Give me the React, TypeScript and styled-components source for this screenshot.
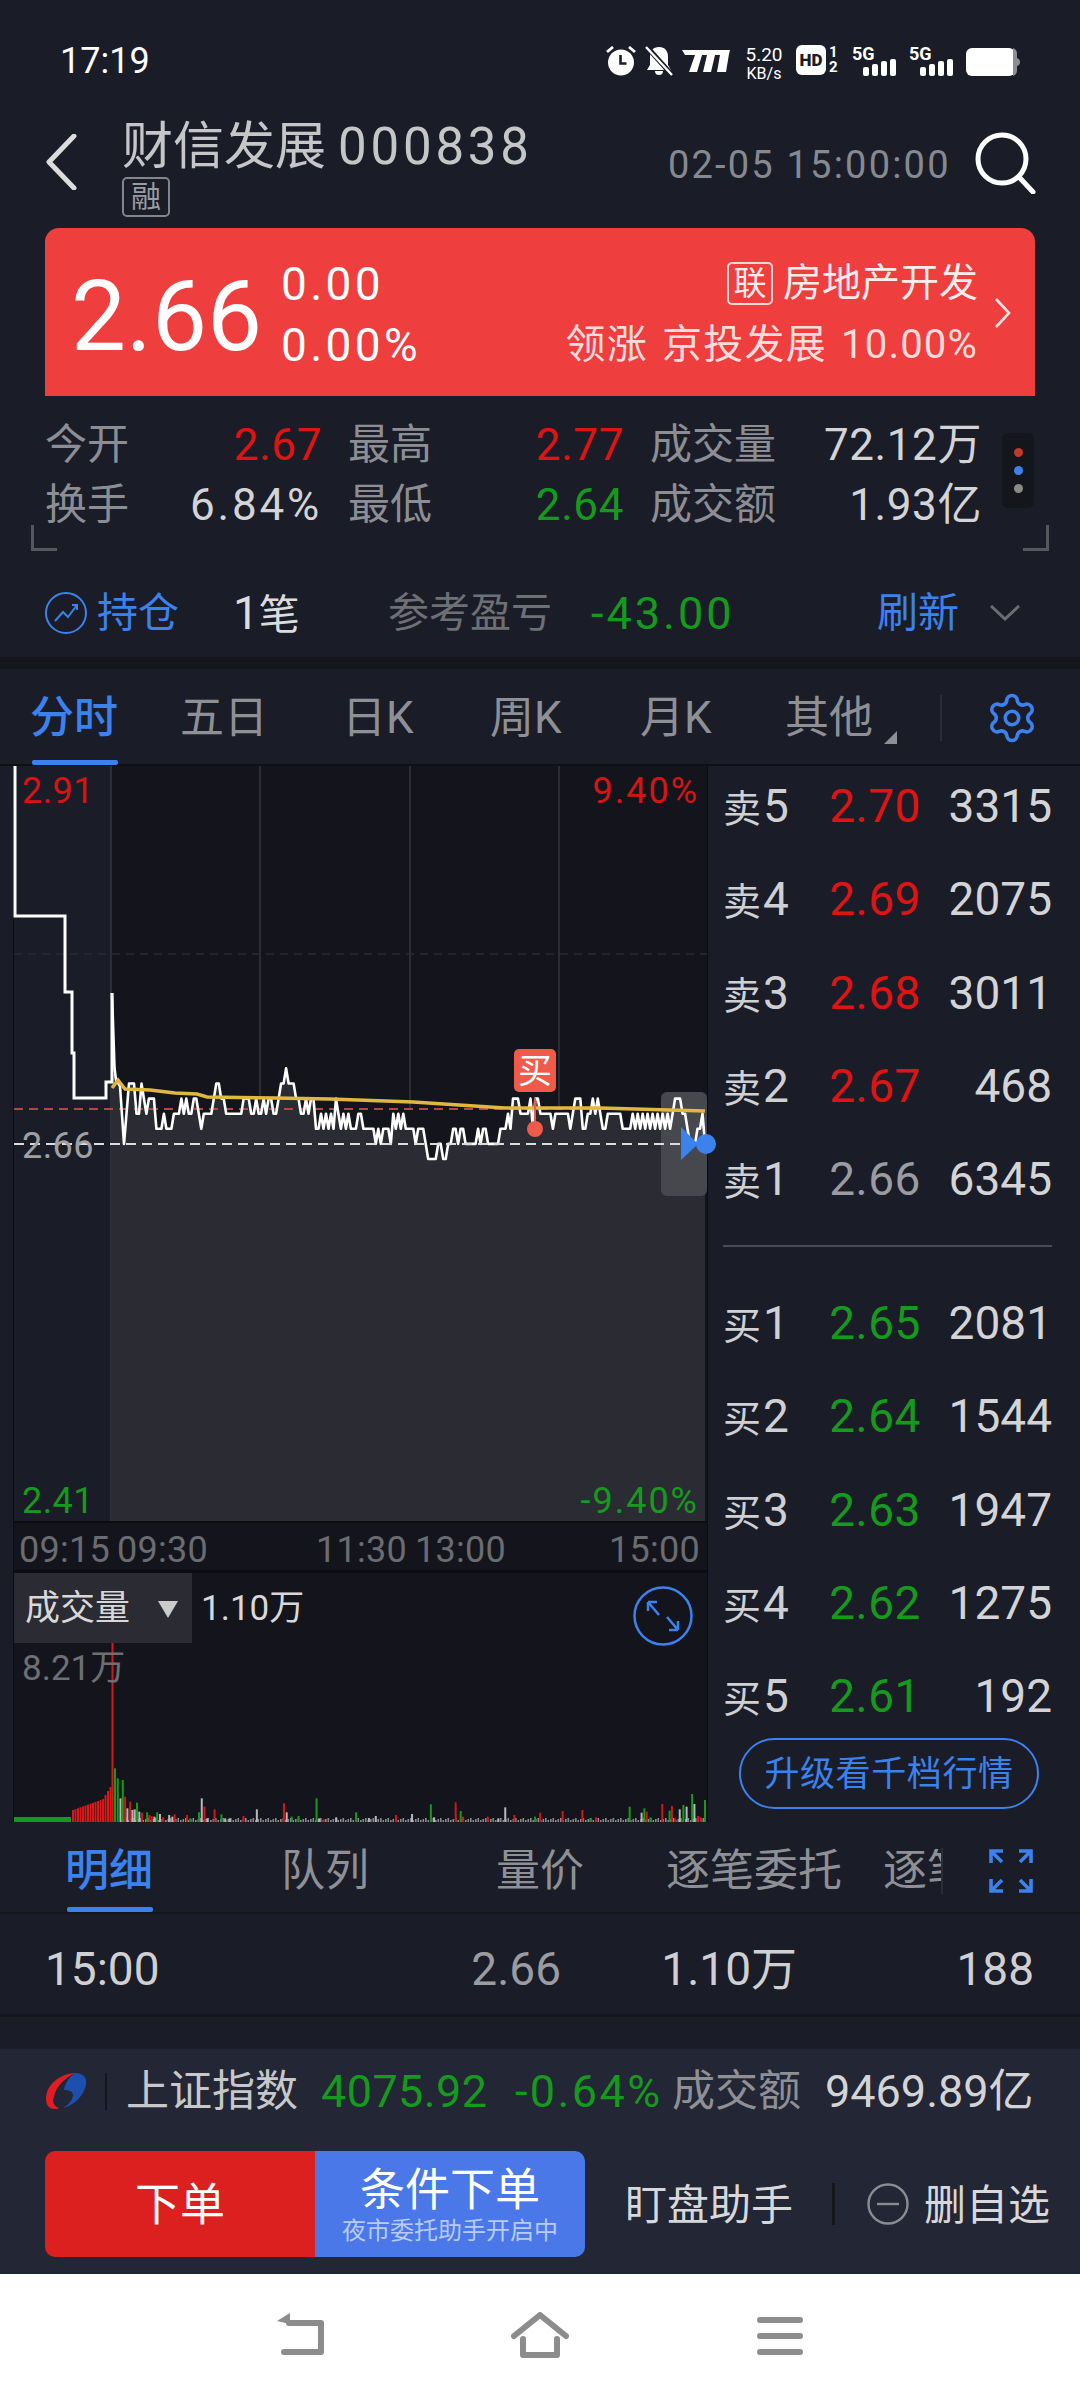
import React from "react";
import styled, { createGlobalStyle } from "styled-components";
import { Settings } from "lucide-react";

const RED = "#e01313";
const GREEN = "#149a1d";
const BLUE = "#3b82ee";

const GlobalStyle = createGlobalStyle`
  html, body {
    margin: 0;
    padding: 0;
    background: #1a1d28;
  }
  * {
    box-sizing: border-box;
  }
  body {
    font-family: Roboto, "Noto Sans CJK SC", sans-serif;
  }
`;

const Page = styled.div`
  width: 1080px;
  height: 2400px;
  overflow: hidden;
  background: #1a1d28;
  color: #c8c8c8;
  display: flex;
  flex-direction: column;
  line-height: 1;
  white-space: nowrap;
`;

/* status bar */
const StatusBar = styled.div`
  height: 110px;
  padding: 45px 60px 0 60px;
  display: flex;
  align-items: flex-start;
  justify-content: space-between;
`;

const Clock = styled.span`
  font-size: 36px;
  line-height: 32px;
  color: #fff;
`;

const StatusIcons = styled.div`
  display: flex;
  align-items: flex-start;
  height: 32px;
  color: #fff;
`;

const NetSpeed = styled.div`
  width: 38px;
  margin: 0 13px 0 15px;
  display: flex;
  flex-direction: column;
  align-items: center;
  font-size: 19px;
  gap: 2px;
  span + span {
    font-size: 16px;
  }
`;

const HdBadge = styled.span`
  width: 30px;
  height: 30px;
  border-radius: 6px;
  background: #fff;
  color: #1a1d28;
  font-size: 17px;
  font-weight: 900;
  display: flex;
  align-items: center;
  justify-content: center;
`;

const SimDigits = styled.div`
  width: 12px;
  margin-left: 3px;
  margin-right: 11px;
  display: flex;
  flex-direction: column;
  justify-content: space-between;
  height: 30px;
  font-size: 15px;
  font-weight: 700;
`;

const Signal = styled.div`
  width: 44px;
  height: 31px;
  position: relative;
  margin-right: 13px;
  font-size: 18px;
  font-weight: 700;
`;

const SignalBars = styled.div`
  position: absolute;
  right: 0;
  bottom: 0;
  display: flex;
  align-items: flex-end;
  gap: 3px;
`;

const SignalBar = styled.i<{ $h: number }>`
  display: block;
  width: 6px;
  height: ${(p) => p.$h}px;
  border-radius: 2px;
  background: #fff;
`;

/* header */
const Header = styled.div`
  height: 118px;
  position: relative;
  display: flex;
  padding-left: 45px;
`;

const TitleBlock = styled.div`
  margin-left: 45px;
  padding-top: 9px;
  display: flex;
  flex-direction: column;
  align-items: flex-start;
`;

const Title = styled.div`
  font-size: 51px;
  line-height: 56px;
  color: #c6c6c8;
  span {
    letter-spacing: 3.8px;
    margin-left: 12px;
  }
`;

const MarginBadge = styled.span`
  width: 48px;
  height: 40px;
  margin-top: 2px;
  border: 2px solid #83858c;
  border-radius: 5px;
  color: #9a9ca2;
  font-size: 30px;
  display: flex;
  align-items: center;
  justify-content: center;
`;

const QuoteTime = styled.span`
  position: absolute;
  left: 668px;
  top: 36px;
  font-size: 38px;
  letter-spacing: 2.2px;
  color: #868a90;
`;

const SearchSlot = styled.div`
  position: absolute;
  left: 975px;
  top: 22px;
`;

const BackSlot = styled.div`
  padding-top: 24px;
`;

/* quote card */
const QuoteCard = styled.div`
  height: 168px;
  margin: 0 45px;
  border-radius: 14px 14px 0 0;
  background: #ef3e3e;
  color: #fff;
  display: flex;
  align-items: center;
  padding-left: 26px;
  position: relative;
`;

const LastPrice = styled.span`
  font-size: 98px;
  width: 210px;
  margin-top: 10px;
`;

const ChangeStack = styled.div`
  display: flex;
  flex-direction: column;
  gap: 15px;
  margin-top: 5px;
  font-size: 46px;
  letter-spacing: 3.3px;
`;

const SectorStack = styled.div`
  margin-left: auto;
  margin-right: 57px;
  margin-top: 3px;
  display: flex;
  flex-direction: column;
  align-items: flex-end;
  gap: 20px;
`;

const SectorLine = styled.div<{ $soft?: boolean }>`
  display: flex;
  align-items: center;
  font-size: ${(p) => (p.$soft ? 40 : 39)}px;
  letter-spacing: ${(p) => (p.$soft ? 1.2 : 0)}px;
  word-spacing: ${(p) => (p.$soft ? 3 : 0)}px;
  color: ${(p) => (p.$soft ? "#ffdcdc" : "#ffecec")};
`;

const LinkBadge = styled.span`
  width: 46px;
  height: 43px;
  margin-right: 10px;
  border: 2px solid #ffd9d9;
  border-radius: 5px;
  font-size: 33px;
  display: flex;
  align-items: center;
  justify-content: center;
`;

const CardChevron = styled.div`
  position: absolute;
  left: 949px;
  top: 70px;
`;

/* stats */
const Stats = styled.div`
  height: 164px;
  position: relative;
  padding: 19px 0 0 45px;
  display: flex;
  align-items: flex-start;
  gap: 20px;
`;

const StatsGrid = styled.div`
  width: 937px;
  display: grid;
  grid-template-columns: 91px 186px 116px 186px 156px 202px;
  grid-auto-rows: 60px;
  align-items: center;
  & > *:nth-child(6n + 3),
  & > *:nth-child(6n + 5) {
    margin-left: 26px;
  }
`;

const StatLabel = styled.span`
  font-size: 42px;
  color: #8c8e94;
`;

const StatValue = styled.span<{ $color?: string; $track?: number }>`
  font-size: 44px;
  letter-spacing: ${(p) => p.$track || 0.6}px;
  text-align: right;
  color: ${(p) => p.$color || "#d4d4d6"};
`;

const DotsPanel = styled.div`
  width: 32px;
  height: 75px;
  margin-top: 18px;
  border-radius: 6px;
  background: #15161b;
  display: flex;
  flex-direction: column;
  align-items: center;
  justify-content: center;
  gap: 9px;
`;

const Dot = styled.i<{ $color: string }>`
  display: block;
  width: 9px;
  height: 9px;
  border-radius: 50%;
  background: ${(p) => p.$color};
`;

const Corner = styled.i<{ $right?: boolean }>`
  position: absolute;
  top: 129px;
  ${(p) => (p.$right ? "left: 1023px;" : "left: 31px;")}
  width: 26px;
  height: 26px;
  border-bottom: 3px solid #55575e;
  ${(p) =>
    p.$right ? "border-right: 3px solid #55575e;" : "border-left: 3px solid #55575e;"}
`;

/* holdings */
const Holdings = styled.div`
  height: 97px;
  padding: 9px 0 0 45px;
  display: grid;
  grid-template-columns: 52px 136px 155px 203px 286px 113px 1fr;
  align-items: center;
`;

const HoldingText = styled.span<{ $color: string; $big?: boolean }>`
  font-size: ${(p) => (p.$big ? 45 : 41)}px;
  letter-spacing: ${(p) => (p.$big ? 3 : 0)}px;
  color: ${(p) => p.$color};
  b {
    font-weight: 400;
    font-size: 46px;
  }
`;

const Band = styled.div`
  height: 12px;
  flex: none;
  background: #14161c;
`;

/* period tabs */
const PeriodTabs = styled.div`
  height: 97px;
  flex: none;
  padding: 2px 0 0 30px;
  display: grid;
  grid-template-columns: 150px 162px 148px 150px 145px 155px 45px 1fr;
  align-items: center;
  border-bottom: 2px solid #0f1015;
`;

const Tab = styled.span<{ $active?: boolean; $under?: number }>`
  position: relative;
  justify-self: start;
  font-size: 44px;
  color: ${(p) => (p.$active ? BLUE : "#8e9096")};
  font-weight: ${(p) => (p.$active ? 500 : 400)};
  height: 44px;
  line-height: 44px;
  ${(p) =>
    p.$active &&
    `&::after {
      content: "";
      position: absolute;
      left: 2px;
      right: 0;
      bottom: ${p.$under}px;
      height: 5px;
      border-radius: 2px;
      background: ${BLUE};
    }`}
`;

const OtherMark = styled.i`
  position: absolute;
  right: -24px;
  bottom: -4px;
  width: 0;
  height: 0;
  border-left: 13px solid transparent;
  border-bottom: 13px solid #8e9096;
`;

const TabSep = styled.i`
  display: block;
  width: 2px;
  height: 46px;
  background: #2a2d38;
`;

/* main chart area */
const Market = styled.div`
  height: 1056px;
  flex: none;
  display: flex;
`;

const ChartColumn = styled.div`
  width: 695px;
  margin-left: 13px;
  padding: 0 1px;
  background: #0c0d11;
  display: flex;
  flex-direction: column;
`;

const PricePane = styled.div`
  height: 755px;
  flex: none;
  position: relative;
  svg {
    display: block;
    overflow: visible;
  }
`;

const ChartLabel = styled.span<{ $color: string; $top: number; $right?: boolean }>`
  position: absolute;
  top: ${(p) => p.$top}px;
  ${(p) => (p.$right ? "right: 8px;" : "left: 8px;")}
  font-size: 36px;
  letter-spacing: ${(p) => (p.$right ? 2 : 0.4)}px;
  color: ${(p) => p.$color};
`;

const BuyTag = styled.span`
  position: absolute;
  left: 500px;
  top: 283px;
  width: 42px;
  height: 43px;
  border-radius: 5px;
  background: #ef5b4b;
  color: #fff;
  font-size: 34px;
  display: flex;
  align-items: center;
  justify-content: center;
`;

const TimeAxis = styled.div`
  height: 47px;
  flex: none;
  margin-top: 2px;
  background: #14151c;
  position: relative;
`;

const TimeTick = styled.span<{ $x: number }>`
  position: absolute;
  top: 9px;
  left: ${(p) => p.$x}px;
  font-size: 36px;
  letter-spacing: 0.3px;
  color: #6a6c72;
`;

const VolumePane = styled.div`
  flex: 1;
  margin-top: 3px;
  background: #14151c;
  position: relative;
  display: flex;
  flex-direction: column;
  svg {
    display: block;
  }
`;

const VolumeHead = styled.div`
  height: 70px;
  flex: none;
  display: flex;
  align-items: center;
  font-size: 35px;
  color: #d8d8da;
`;

const VolumeSelect = styled.div`
  width: 178px;
  height: 70px;
  margin-right: 9px;
  padding-left: 11px;
  background: #2b2c33;
  display: flex;
  align-items: center;
  gap: 28px;
  i {
    width: 0;
    height: 0;
    margin-top: 2px;
    border-left: 10px solid transparent;
    border-right: 10px solid transparent;
    border-top: 17px solid #ccc;
  }
`;

const MaxVolume = styled.span`
  position: absolute;
  left: 8px;
  top: 78px;
  font-size: 35px;
  color: #6e6f74;
`;

const ExpandSlot = styled.div`
  position: absolute;
  left: 619px;
  top: 13px;
`;

/* order book */
const OrderBook = styled.div`
  flex: 1;
  padding: 10px 28px 0 15px;
  display: flex;
  flex-direction: column;
`;

const OrderRows = styled.div`
  display: flex;
  flex-direction: column;
  gap: 33.25px;
`;

const OrderRow = styled.div`
  height: 60px;
  display: grid;
  grid-template-columns: 96px 112px 1fr;
  align-items: center;
`;

const OrderLabel = styled.span`
  font-size: 38px;
  color: #d0d0d2;
  b {
    font-weight: 400;
    font-size: 46px;
    margin-left: 2px;
  }
`;

const OrderPrice = styled.span<{ $color: string }>`
  font-size: 46px;
  letter-spacing: 0.4px;
  text-align: center;
  color: ${(p) => p.$color};
`;

const OrderQty = styled.span`
  font-size: 46px;
  text-align: right;
  color: #d4d4d6;
`;

const BookDivider = styled.div`
  height: 2px;
  margin: 36px 0 46px;
  background: #4a4c55;
`;

const UpgradeButton = styled.div`
  width: 300px;
  height: 71px;
  margin: 12px 0 0 16px;
  padding-top: 2px;
  border: 2px solid ${BLUE};
  border-radius: 36px;
  color: ${BLUE};
  font-size: 35px;
  letter-spacing: 0.6px;
  display: flex;
  align-items: center;
  justify-content: center;
`;

/* detail tabs */
const DetailTabs = styled.div`
  height: 92px;
  flex: none;
  padding: 8px 0 0 65px;
  display: grid;
  grid-template-columns: 216px 215px 170px 217px 58px 48px 1fr;
  align-items: center;
  border-bottom: 2px solid #14161c;
`;

const ClippedTab = styled.div`
  overflow: hidden;
  font-size: 44px;
  color: #8e9096;
`;

const DetailRow = styled.div`
  height: 103px;
  flex: none;
  padding: 9px 46px 0 45px;
  display: grid;
  grid-template-columns: 200px 316px 236px 1fr;
  align-items: center;
  border-bottom: 3px solid #14161c;
  font-size: 46px;
  color: #d0d0d2;
`;

const DetailCell = styled.span<{ $right?: boolean; $dim?: boolean }>`
  ${(p) => p.$right && "text-align: right;"}
  ${(p) => p.$dim && "color: #9a9ca0;"}
`;

const Spacer = styled.div`
  height: 32px;
  flex: none;
`;

/* footer */
const Footer = styled.div`
  height: 225px;
  flex: none;
  background: #232634;
`;

const IndexRow = styled.div`
  height: 84px;
  padding-left: 45px;
  display: grid;
  grid-template-columns: 60px 21px 195px 194px 157px 153px 1fr;
  align-items: center;
`;

const IndexSep = styled.i`
  display: block;
  width: 2px;
  height: 37px;
  background: #14161c;
`;

const IndexText = styled.span<{ $color: string; $cjk?: boolean; $track?: number }>`
  color: ${(p) => p.$color};
  font-size: ${(p) => (p.$cjk ? 43 : 45)}px;
  letter-spacing: ${(p) => p.$track || 0}px;
`;

const ActionRow = styled.div`
  margin-top: 18px;
  padding-left: 45px;
  display: flex;
  align-items: center;
`;

const OrderButtons = styled.div`
  width: 540px;
  height: 106px;
  border-radius: 10px;
  overflow: hidden;
  display: flex;
`;

const OrderButton = styled.div<{ $bg: string }>`
  width: 270px;
  padding-top: 3px;
  background: ${(p) => p.$bg};
  color: #fff;
  font-size: 45px;
  display: flex;
  flex-direction: column;
  align-items: center;
  justify-content: center;
  small {
    font-size: 24px;
    margin-top: 6px;
    color: #b8cbf8;
  }
`;

const ActionText = styled.span<{ $lead?: number }>`
  margin-left: ${(p) => p.$lead || 0}px;
  padding-top: 3px;
  font-size: 42px;
  color: #d8d8da;
`;

const ActionSep = styled.i`
  display: block;
  width: 3px;
  height: 42px;
  margin: 0 32px 0 39px;
  background: #14161c;
`;

const WatchIcon = styled.div`
  margin-right: 15px;
  display: flex;
`;

/* nav */
const NavBar = styled.div`
  height: 126px;
  flex: none;
  background: #fff;
  display: grid;
  grid-template-columns: 236px 246px 1fr;
  padding-left: 275px;
  padding-top: 38px;
  align-items: start;
`;

const PRE_LEVELS = `1 3 5 5 5 3 3 5 4 3 4 4 4 2 2 2 3 2 2 2 3 3 3 4 3 4 3 3 4 4 3 2 3 3 3 3 4 5 5 4 4 3 3 3 3 3 3 3
4 4 4 3 3 4 3 3 4 3 4 4 3 3 4 5 5 6 5 5 5 4 4 3 3 4 3 4 4 2 2 3 2 3 2 3 2 4 3 2 3 2 3 2 2 2 3 3 2 2 2 2 2 1 2 1 2 2 2 1
3 2 3 2 3 2 2 2 2 1 2 2 2 1 0 0 0 0 1 1 0 0 1 1 2 2 1 2 2 1 1 1 1 1 2 1 2 2 1 1 1 1 1 2 2 2 3 2 4 4 4 3 3 3 3 4 2 4 4 3
3 3 3 3 2 3 3 3 3 3 3 2 3 4 4 4 2 2 3 3 4 3 4 3 2 2 3 3 3 3 3 3 2 2 2 2 3 2 3 2 3 2 3 2 3 2 3 2 3 2 3 2 3 4 4 4 3 3 2 1
1 1 2 2 3 1`
  .trim()
  .split(/\s+/)
  .map(Number);

const levelY = (l: number) => 1159 - l * 15.1;

// points are in page coordinates, the svg viewBox is set to the same space
function priceLine() {
  const start = 124;
  const end = 705;
  const step = (end - start) / (PRE_LEVELS.length - 1);
  const tail = PRE_LEVELS.map(
    (l, i) => `L${(start + i * step).toFixed(1)} ${levelY(l).toFixed(1)}`
  ).join(" ");
  return `M112 993 L114.5 1068 L116 1080 L120 1086 ${tail}`;
}

const openPart = "M15 766 L15 916 L65 916 L65 992 L72 992 L72 1053 L74 1053 L74 1098 L106 1098 L106 1082 L112 1082 L112 993";

type VolBar = [number, number, "g" | "r" | "w"];

const VOL_COLORS = { g: "#149a1d", r: "#d01818", w: "#b8b8ba" };

const VOL_BARS: VolBar[] = [
  [250, 865, "g"], [256, 895, "g"], [262, 955, "w"], [267, 900, "g"], [272, 950, "r"], [277, 985, "w"],
  [283, 965, "r"], [288, 990, "w"], [293, 988, "w"], [298, 968, "g"], [303, 995, "w"], [309, 998, "r"],
  [320, 997, "g"], [325, 1005, "r"], [330, 1008, "r"], [336, 1010, "w"], [342, 997, "g"], [348, 1002, "w"],
  [355, 1012, "r"], [368, 1005, "w"], [375, 1010, "w"], [380, 1003, "r"], [407, 1005, "r"], [414, 1015, "g"],
  [433, 997, "g"], [439, 955, "w"], [445, 980, "r"], [451, 1015, "w"], [467, 988, "r"], [482, 1003, "g"],
  [490, 1015, "w"], [500, 1015, "w"], [530, 1008, "r"], [559, 988, "w"], [618, 970, "r"], [624, 997, "w"],
  [635, 1010, "g"], [650, 1008, "g"], [689, 955, "g"], [695, 1015, "w"], [705, 1018, "r"], [732, 1012, "w"],
  [775, 997, "g"], [803, 1014, "w"], [818, 1008, "w"], [862, 1005, "r"], [897, 1002, "w"], [938, 973, "g"],
  [945, 1012, "w"], [992, 967, "r"], [1003, 993, "g"], [1008, 1010, "r"], [1062, 1010, "r"], [1085, 1015, "w"],
  [1100, 982, "w"], [1120, 1005, "r"], [1165, 1010, "g"], [1176, 998, "r"], [1225, 993, "r"], [1268, 990, "r"],
  [1285, 1015, "g"], [1298, 1012, "r"], [1371, 980, "g"], [1397, 998, "w"], [1403, 985, "g"], [1408, 995, "r"],
  [1416, 1012, "g"], [1442, 972, "r"], [1458, 992, "g"], [1463, 978, "r"], [1470, 1015, "r"], [1480, 988, "w"],
  [1488, 975, "g"], [1495, 980, "w"], [1507, 942, "g"], [1512, 972, "w"], [1520, 1008, "r"], [1526, 1012, "r"],
  [1535, 960, "g"],
];

const SELLS = [
  ["5", "2.70", RED, "3315"],
  ["4", "2.69", RED, "2075"],
  ["3", "2.68", RED, "3011"],
  ["2", "2.67", RED, "468"],
  ["1", "2.66", "#9a9ca0", "6345"],
];

const BUYS = [
  ["1", "2.65", GREEN, "2081"],
  ["2", "2.64", GREEN, "1544"],
  ["3", "2.63", GREEN, "1947"],
  ["4", "2.62", GREEN, "1275"],
  ["5", "2.61", GREEN, "192"],
];

function PriceChart() {
  const line = priceLine();
  return (
    <svg width="693" height="755" viewBox="14 766 693 755">
      <rect x="14" y="766" width="97" height="755" fill="#1a1d28" />
      <rect x="111" y="766" width="596" height="755" fill="#14151c" />
      <path d={`${line} L705 1521 L112 1521 Z`} fill="#2b2c33" />
      {[111, 260, 410, 559].map((x) => (
        <line key={x} x1={x} x2={x} y1="766" y2={x === 111 ? 1521 : 1110} stroke="#33353f" strokeWidth="1.5" />
      ))}
      <line x1="14" x2="707" y1="954" y2="954" stroke="#2a2b31" strokeWidth="1.5" strokeDasharray="8 6" />
      <line x1="14" x2="707" y1="1109" y2="1109" stroke="#b5483e" strokeWidth="2" strokeDasharray="9 6" />
      <rect x="661" y="1092" width="46" height="104" rx="6" fill="#47484e" />
      <path d={openPart} fill="none" stroke="#fff" strokeWidth="3" />
      <path d={line} fill="none" stroke="#fff" strokeWidth="2.6" strokeLinejoin="round" />
      <line x1="14" x2="685" y1="1144" y2="1144" stroke="#dcdcdc" strokeWidth="2" strokeDasharray="10 6" />
      <path
        d="M112 1088 L118 1080 L125 1089 L150 1090 L175 1093 L197 1094 L207 1097 L275 1098 L330 1099 L413 1102 L459 1105 L505 1108 L600 1108 L705 1111"
        fill="none"
        stroke="#e0b840"
        strokeWidth="3.4"
      />
      <circle cx="535" cy="1129" r="8" fill="#ef5b4b" />
      <line x1="535" x2="535" y1="1098" y2="1124" stroke="#ef5b4b" strokeWidth="2" />
      <path d="M681 1127 L698 1144 L681 1160 Z" fill={BLUE} />
      <circle cx="706" cy="1144" r="10" fill={BLUE} />
    </svg>
  );
}

function VolumeChart() {
  const ramp = Array.from({ length: 16 }, (_, i) => i);
  const tiny = Array.from({ length: 234 }, (_, i) => i);
  return (
    <svg width="693" height="179" viewBox="14 1643 693 179">
      <line x1="112.5" x2="112.5" y1="1643" y2="1822" stroke="#d81818" strokeWidth="2" />
      <rect x="14" y="1817" width="57" height="5" fill={GREEN} />
      {ramp.map((i) => {
        const h = i < 12 ? 12 + i * 0.9 : 23 + (i - 12) * 4;
        return <rect key={i} x={72 + i * 2.5} y={1822 - h} width="2" height={h} fill="#d81818" />;
      })}
      {tiny.map((i) => (
        <rect key={i} x={120 + i * 2.5} y={1820 - (i * 7) % 3} width="1.6" height={2 + (i * 7) % 3} fill="#8a8a8c" />
      ))}
      {VOL_BARS.map(([zx, zy, c]) => (
        <rect
          key={zx}
          x={zx / 2.178 - 0.8}
          y={1480 + zy / 3}
          width="2"
          height={1822 - (1480 + zy / 3)}
          fill={VOL_COLORS[c]}
        />
      ))}
    </svg>
  );
}

function AlarmIcon() {
  return (
    <svg width="30" height="30" viewBox="0 0 30 30" style={{ marginTop: 1 }}>
      <circle cx="15" cy="16.5" r="13" fill="#fff" />
      <path d="M14.5 9v8.5h6" fill="none" stroke="#1a1d28" strokeWidth="2.6" />
      <path d="M1 6l6-5M29 6l-6-5" stroke="#fff" strokeWidth="2.8" />
    </svg>
  );
}

function MutedBell() {
  return (
    <svg width="28" height="30" viewBox="0 0 28 30" style={{ marginLeft: 9, marginTop: 1 }}>
      <path d="M14 1c6 0 9 4 9 10v8l3 5H2l3-5v-8c0-6 3-10 9-10z" fill="#fff" />
      <path d="M10 25h8a4 4 0 0 1-8 0z" fill="#fff" />
      <path d="M2 1l25 28" stroke="#1a1d28" strokeWidth="5" />
      <path d="M1 1l26 28" stroke="#fff" strokeWidth="2.4" />
    </svg>
  );
}

function CarrierLogo() {
  return (
    <svg width="48" height="24" viewBox="0 0 48 24" style={{ marginLeft: 9, marginTop: 4 }}>
      <path d="M0 1h48l-1 4-3 18h-9l3-17h-5l-4 17h-8l4-17h-5l-5 17H7l6-17H3z" fill="#fff" />
    </svg>
  );
}

function BatteryIcon() {
  return (
    <svg width="54" height="28" viewBox="0 0 54 28" style={{ marginTop: 3 }}>
      <rect x="0" y="0" width="49" height="28" rx="6" fill="#fff" />
      <path d="M47 0a6 6 0 0 1 4 6v16a6 6 0 0 1-4 6z" fill="#8d8f95" />
      <path d="M51 10q3 1 3 4t-3 4z" fill="#8d8f95" />
    </svg>
  );
}

function BackArrow() {
  return (
    <svg width="32" height="56" viewBox="0 0 32 56">
      <path d="M29 2L4 28l25 26" fill="none" stroke="#dcdcdc" strokeWidth="5" strokeLinecap="round" strokeLinejoin="round" />
    </svg>
  );
}

function SearchIcon() {
  return (
    <svg width="62" height="62" viewBox="0 0 62 62">
      <circle cx="27" cy="27" r="24" fill="none" stroke="#fff" strokeWidth="5" />
      <path d="M44 45l14 15" stroke="#fff" strokeWidth="5" strokeLinecap="round" />
    </svg>
  );
}

function TrendCircle() {
  return (
    <svg width="42" height="42" viewBox="0 0 42 42">
      <circle cx="21" cy="21" r="20" fill="none" stroke={BLUE} strokeWidth="2" />
      <path d="M10 29l8-9 5 5 9-12M27 13h5v5" fill="none" stroke={BLUE} strokeWidth="2" />
    </svg>
  );
}

function ExpandCircle() {
  return (
    <svg width="60" height="60" viewBox="0 0 60 60">
      <circle cx="30" cy="30" r="28.5" fill="none" stroke={BLUE} strokeWidth="2.5" />
      <path d="M15 16l11 13M15 16v9M15 16h9M45 44L34 31M45 44v-9M45 44h-9" fill="none" stroke={BLUE} strokeWidth="2.5" />
    </svg>
  );
}

function CornersIcon() {
  return (
    <svg width="44" height="44" viewBox="0 0 44 44">
      <path
        d="M2 14V2h12M2 2l11 11M42 14V2H30M42 2L31 13M2 30v12h12M2 42l11-11M42 30v12H30M42 42L31 31"
        fill="none"
        stroke={BLUE}
        strokeWidth="3.6"
      />
    </svg>
  );
}

function IndexLogo() {
  return (
    <svg width="42" height="38" viewBox="0 0 42 38">
      <path d="M30 1C14 2 1 13 1 27c0 7 4 10 9 10 1 0 3 0 4-1-5-2-7-6-5-11C11 14 20 6 30 1z" fill="#e01d25" />
      <path d="M30 1c8 0 12 4 11 11-1 10-12 22-23 24 5-3 10-8 10-13 0-4-5-5-9-5 1-7 6-14 11-17z" fill="#1c4fae" />
    </svg>
  );
}

export default function App() {
  return (
    <Page>
      <GlobalStyle />
      <StatusBar>
        <Clock>17:19</Clock>
        <StatusIcons>
          <AlarmIcon />
          <MutedBell />
          <CarrierLogo />
          <NetSpeed>
            <span>5.20</span>
            <span>KB/s</span>
          </NetSpeed>
          <HdBadge>HD</HdBadge>
          <SimDigits>
            <span>1</span>
            <span>2</span>
          </SimDigits>
          <Signal>
            5G
            <SignalBars>
              {[9, 12, 15, 17].map((h) => (
                <SignalBar key={h} $h={h} />
              ))}
            </SignalBars>
          </Signal>
          <Signal>
            5G
            <SignalBars>
              {[9, 12, 15, 17].map((h) => (
                <SignalBar key={h} $h={h} />
              ))}
            </SignalBars>
          </Signal>
          <BatteryIcon />
        </StatusIcons>
      </StatusBar>

      <Header>
        <BackSlot>
          <BackArrow />
        </BackSlot>
        <TitleBlock>
          <Title>
            财信发展<span>000838</span>
          </Title>
          <MarginBadge>融</MarginBadge>
        </TitleBlock>
        <QuoteTime>02-05 15:00:00</QuoteTime>
        <SearchSlot>
          <SearchIcon />
        </SearchSlot>
      </Header>

      <QuoteCard>
        <LastPrice>2.66</LastPrice>
        <ChangeStack>
          <span>0.00</span>
          <span>0.00%</span>
        </ChangeStack>
        <SectorStack>
          <SectorLine>
            <LinkBadge>联</LinkBadge>房地产开发
          </SectorLine>
          <SectorLine $soft>领涨 京投发展 10.00%</SectorLine>
        </SectorStack>
        <CardChevron>
          <svg width="18" height="30" viewBox="0 0 18 30">
            <path d="M2 1l13 14L2 29" fill="none" stroke="#ffe4e4" strokeWidth="2.6" />
          </svg>
        </CardChevron>
      </QuoteCard>

      <Stats>
        <StatsGrid>
          <StatLabel>今开</StatLabel>
          <StatValue $color={RED}>2.67</StatValue>
          <StatLabel>最高</StatLabel>
          <StatValue $color={RED}>2.77</StatValue>
          <StatLabel>成交量</StatLabel>
          <StatValue>72.12万</StatValue>
          <StatLabel>换手</StatLabel>
          <StatValue $track={2.8}>6.84%</StatValue>
          <StatLabel>最低</StatLabel>
          <StatValue $color={GREEN}>2.64</StatValue>
          <StatLabel>成交额</StatLabel>
          <StatValue>1.93亿</StatValue>
        </StatsGrid>
        <DotsPanel>
          <Dot $color="#c0392b" />
          <Dot $color={BLUE} />
          <Dot $color="#8a8a8a" />
        </DotsPanel>
        <Corner />
        <Corner $right />
      </Stats>

      <Holdings>
        <TrendCircle />
        <HoldingText $color={BLUE}>持仓</HoldingText>
        <HoldingText $color="#dcdcde">
          <b>1</b>笔
        </HoldingText>
        <HoldingText $color="#6e7074">参考盈亏</HoldingText>
        <HoldingText $color={GREEN} $big>
          -43.00
        </HoldingText>
        <HoldingText $color={BLUE}>刷新</HoldingText>
        <svg width="30" height="16" viewBox="0 0 30 16">
          <path d="M1 1l14 13L29 1" fill="none" stroke="#6a6d74" strokeWidth="3" />
        </svg>
      </Holdings>

      <Band />

      <PeriodTabs>
        <Tab $active $under={-25}>
          分时
        </Tab>
        <Tab>五日</Tab>
        <Tab>日K</Tab>
        <Tab>周K</Tab>
        <Tab>月K</Tab>
        <Tab>
          其他
          <OtherMark />
        </Tab>
        <TabSep />
        <Settings size={54} color={BLUE} strokeWidth={1.6} />
      </PeriodTabs>

      <Market>
        <ChartColumn>
          <PricePane>
            <PriceChart />
            <ChartLabel $color="#d81313" $top={7}>
              2.91
            </ChartLabel>
            <ChartLabel $color="#d81313" $top={7} $right>
              9.40%
            </ChartLabel>
            <ChartLabel $color="#a0a0a2" $top={362}>
              2.66
            </ChartLabel>
            <ChartLabel $color={GREEN} $top={717}>
              2.41
            </ChartLabel>
            <ChartLabel $color={GREEN} $top={717} $right>
              -9.40%
            </ChartLabel>
            <BuyTag>买</BuyTag>
          </PricePane>
          <TimeAxis>
            <TimeTick $x={5}>09:15</TimeTick>
            <TimeTick $x={103}>09:30</TimeTick>
            <TimeTick $x={302}>11:30</TimeTick>
            <TimeTick $x={401}>13:00</TimeTick>
            <TimeTick $x={595}>15:00</TimeTick>
          </TimeAxis>
          <VolumePane>
            <VolumeHead>
              <VolumeSelect>
                成交量
                <i />
              </VolumeSelect>
              1.10万
            </VolumeHead>
            <VolumeChart />
            <MaxVolume>8.21万</MaxVolume>
            <ExpandSlot>
              <ExpandCircle />
            </ExpandSlot>
          </VolumePane>
        </ChartColumn>

        <OrderBook>
          <OrderRows>
            {SELLS.map(([n, price, color, qty]) => (
              <OrderRow key={n}>
                <OrderLabel>
                  卖<b>{n}</b>
                </OrderLabel>
                <OrderPrice $color={color}>{price}</OrderPrice>
                <OrderQty>{qty}</OrderQty>
              </OrderRow>
            ))}
          </OrderRows>
          <BookDivider />
          <OrderRows>
            {BUYS.map(([n, price, color, qty]) => (
              <OrderRow key={n}>
                <OrderLabel>
                  买<b>{n}</b>
                </OrderLabel>
                <OrderPrice $color={color}>{price}</OrderPrice>
                <OrderQty>{qty}</OrderQty>
              </OrderRow>
            ))}
          </OrderRows>
          <UpgradeButton>升级看千档行情</UpgradeButton>
        </OrderBook>
      </Market>

      <DetailTabs>
        <Tab $active $under={-19}>
          明细
        </Tab>
        <Tab>队列</Tab>
        <Tab>量价</Tab>
        <Tab>逐笔委托</Tab>
        <ClippedTab>逐笔成交</ClippedTab>
        <TabSep />
        <CornersIcon />
      </DetailTabs>

      <DetailRow>
        <DetailCell>15:00</DetailCell>
        <DetailCell $right $dim>
          2.66
        </DetailCell>
        <DetailCell $right>1.10万</DetailCell>
        <DetailCell $right>188</DetailCell>
      </DetailRow>
      <Spacer />

      <Footer>
        <IndexRow>
          <IndexLogo />
          <IndexSep />
          <IndexText $color="#c8c8ca" $cjk>
            上证指数
          </IndexText>
          <IndexText $color={GREEN} $track={0.4}>
            4075.92
          </IndexText>
          <IndexText $color={GREEN} $track={2.4}>
            -0.64%
          </IndexText>
          <IndexText $color="#8e9096" $cjk>
            成交额
          </IndexText>
          <IndexText $color="#d4d4d6">9469.89亿</IndexText>
        </IndexRow>
        <ActionRow>
          <OrderButtons>
            <OrderButton $bg="#dc1f1f">下单</OrderButton>
            <OrderButton $bg="#4a78e8">
              条件下单
              <small>夜市委托助手开启中</small>
            </OrderButton>
          </OrderButtons>
          <ActionText $lead={40}>盯盘助手</ActionText>
          <ActionSep />
          <WatchIcon>
            <svg width="42" height="42" viewBox="0 0 42 42">
              <circle cx="21" cy="21" r="19.5" fill="none" stroke="#8a8c92" strokeWidth="2.4" />
              <path d="M10 21h22" stroke="#8a8c92" strokeWidth="2.4" />
            </svg>
          </WatchIcon>
          <ActionText>删自选</ActionText>
        </ActionRow>
      </Footer>

      <NavBar>
        <svg width="50" height="44" viewBox="0 0 50 44">
          <path d="M14 11h32v29H9" fill="none" stroke="#8c8c8c" strokeWidth="6" strokeLinejoin="round" strokeLinecap="round" />
          <path d="M15 1L2 9l13 3z" fill="#8c8c8c" />
        </svg>
        <svg width="58" height="46" viewBox="0 0 58 46">
          <path d="M3 24L29 3l26 21M12 27v16h34V27" fill="none" stroke="#8c8c8c" strokeWidth="6" strokeLinejoin="round" strokeLinecap="round" />
        </svg>
        <svg width="46" height="38" viewBox="0 0 46 38" style={{ marginTop: 5 }}>
          <path d="M3 3h40M3 19h40M3 35h40" stroke="#8c8c8c" strokeWidth="6" strokeLinecap="round" />
        </svg>
      </NavBar>
    </Page>
  );
}
